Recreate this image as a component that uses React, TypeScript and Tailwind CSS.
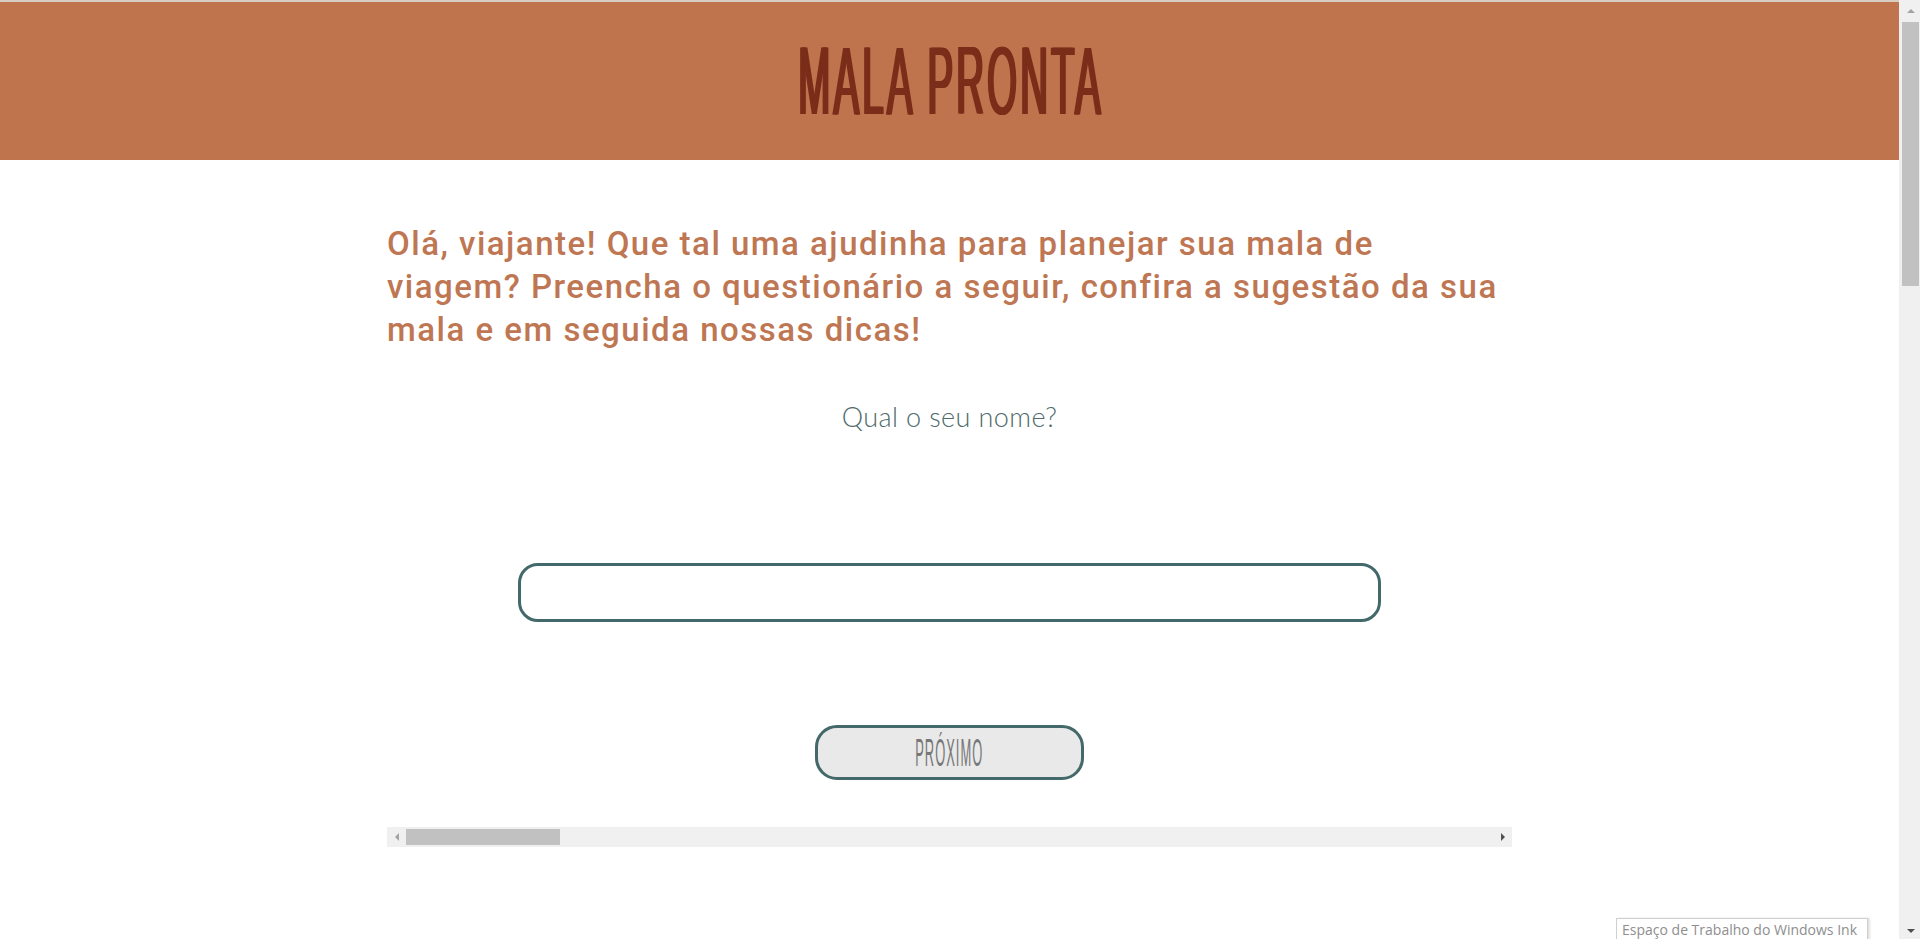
import React from "react";

export default function App() {
  return (
    <div className="relative flex h-[939px] w-[1920px] overflow-hidden bg-white">
      <div className="flex min-w-0 flex-1 flex-col">
        <header className="flex h-[160px] items-center justify-center border-t-2 border-[#d9cdc4] bg-[#bf744d]">
          <h1
            className="inline-block scale-x-[0.4] whitespace-nowrap text-[96px] font-normal leading-none tracking-[8px] text-[#7a2d19] [text-shadow:3px_0_0_#7a2d19,6px_0_0_#7a2d19]"
            style={{ fontFamily: '"Liberation Sans", Arial, sans-serif' }}
          >
            MALA PRONTA
          </h1>
        </header>
        <main className="mx-auto flex w-[1125px] flex-col">
          <p
            className="mt-[62px] whitespace-nowrap text-[33px] font-medium leading-[43px] tracking-[1.5px] text-[#be7653]"
            style={{ fontFamily: 'Roboto, sans-serif' }}
          >
            Olá, viajante! Que tal uma ajudinha para planejar sua mala de
            <br />
            viagem? Preencha o questionário a seguir, confira a sugestão da sua
            <br />
            mala e em seguida nossas dicas!
          </p>
          <p
            className="mt-[48px] text-center text-[27px] font-light leading-[36px] tracking-[0.4px] text-[#4f6b6b]"
            style={{ fontFamily: 'Lato, sans-serif' }}
          >
            Qual o seu nome?
          </p>
          <div className="mt-[128px] flex justify-center">
            <input
              type="text"
              className="h-[59px] w-[863px] rounded-[20px] border-[3px] border-[#44696a] bg-white outline-none"
            />
          </div>
          <div className="mt-[103px] flex justify-center">
            <button className="flex h-[55px] w-[269px] items-center justify-center overflow-hidden rounded-[22px] border-[3px] border-[#44696a] bg-[#e9e9e9]">
              <span
                className="inline-block scale-x-[0.34] whitespace-nowrap text-[38px] leading-none tracking-[3px] text-[#777777]"
                style={{ fontFamily: '"Liberation Sans", Arial, sans-serif' }}
              >
                PRÓXIMO
              </span>
            </button>
          </div>
          <div className="mt-[47px] flex h-[20px] items-center bg-[#f0f0f0]">
            <div className="flex w-[19px] items-center justify-center">
              <div className="h-0 w-0 border-y-[4px] border-r-[4px] border-y-transparent border-r-[#a3a3a3]" />
            </div>
            <div className="h-[16px] w-[154px] bg-[#c1c1c1]" />
            <div className="flex-1" />
            <div className="flex w-[19px] items-center justify-center">
              <div className="h-0 w-0 border-y-[4px] border-l-[4px] border-y-transparent border-l-[#505050]" />
            </div>
          </div>
        </main>
      </div>
      <div className="flex h-full w-[21px] flex-col items-center bg-[#f0f0f0] pl-[2px]">
        <div className="flex h-[22px] items-center justify-center">
          <div className="h-0 w-0 border-x-[4px] border-b-[4px] border-x-transparent border-b-[#a3a3a3]" />
        </div>
        <div className="h-[264px] w-[17px] bg-[#c1c1c1]" />
        <div className="flex-1" />
        <div className="flex h-[17px] items-center justify-center">
          <div className="h-0 w-0 border-x-[4px] border-t-[4px] border-x-transparent border-t-[#505050]" />
        </div>
      </div>
      <div
        className="absolute bottom-[-4px] left-[1616px] flex h-[25px] w-[252px] items-start whitespace-nowrap border border-[#cfcfcf] bg-white px-[5px] pt-[1px] text-[14px] leading-[19px] text-[#8e8e8e] shadow-[2px_0_2px_rgba(0,0,0,0.12)]"
        style={{ fontFamily: '"Open Sans", sans-serif' }}
      >
        Espaço de Trabalho do Windows Ink
      </div>
    </div>
  );
}
